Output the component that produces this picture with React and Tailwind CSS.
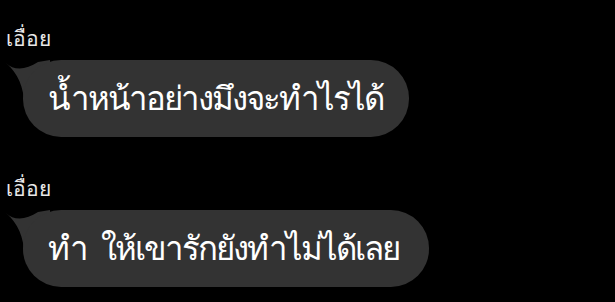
import React from "react";

const messages = [
  { sender: "เอื่อย", text: "น้ำหน้าอย่างมึงจะทำไรได้", width: "w-[386px]" },
  { sender: "เอื่อย", text: "ทำ ให้เขารักยังทำไม่ได้เลย", width: "w-[406px] [word-spacing:7px]" },
];

function Tail() {
  return (
    <svg
      className="absolute left-[-17px] top-0"
      width="44"
      height="44"
      viewBox="0 0 44 44"
    >
      <path d="M0 3 C8 11 20 10 32 2 L44 0 L44 44 L18 44 C18 28 12 13 0 3 Z" fill="#333333" />
    </svg>
  );
}

export default function App() {
  return (
    <div className="w-[615px] h-[302px] bg-black overflow-hidden pt-[24px] pl-[6px]" style={{ fontFamily: "'Noto Sans', 'DejaVu Sans', sans-serif" }}>
      {messages.map((m, i) => (
        <div key={i} className={i === 0 ? "" : "mt-[37px]"}>
          <div className="text-[21px] leading-[28px] text-[#e8e8e8]">{m.sender}</div>
          <div className="relative ml-[17px] mt-[8px]">
            <Tail />
            <div className={`relative ${m.width} h-[77px] rounded-[38px] bg-[#333333] flex items-center pl-[25px] pb-[2px] text-[33px] tracking-[-2px] whitespace-nowrap text-white`}>
              {m.text}
            </div>
          </div>
        </div>
      ))}
    </div>
  );
}
